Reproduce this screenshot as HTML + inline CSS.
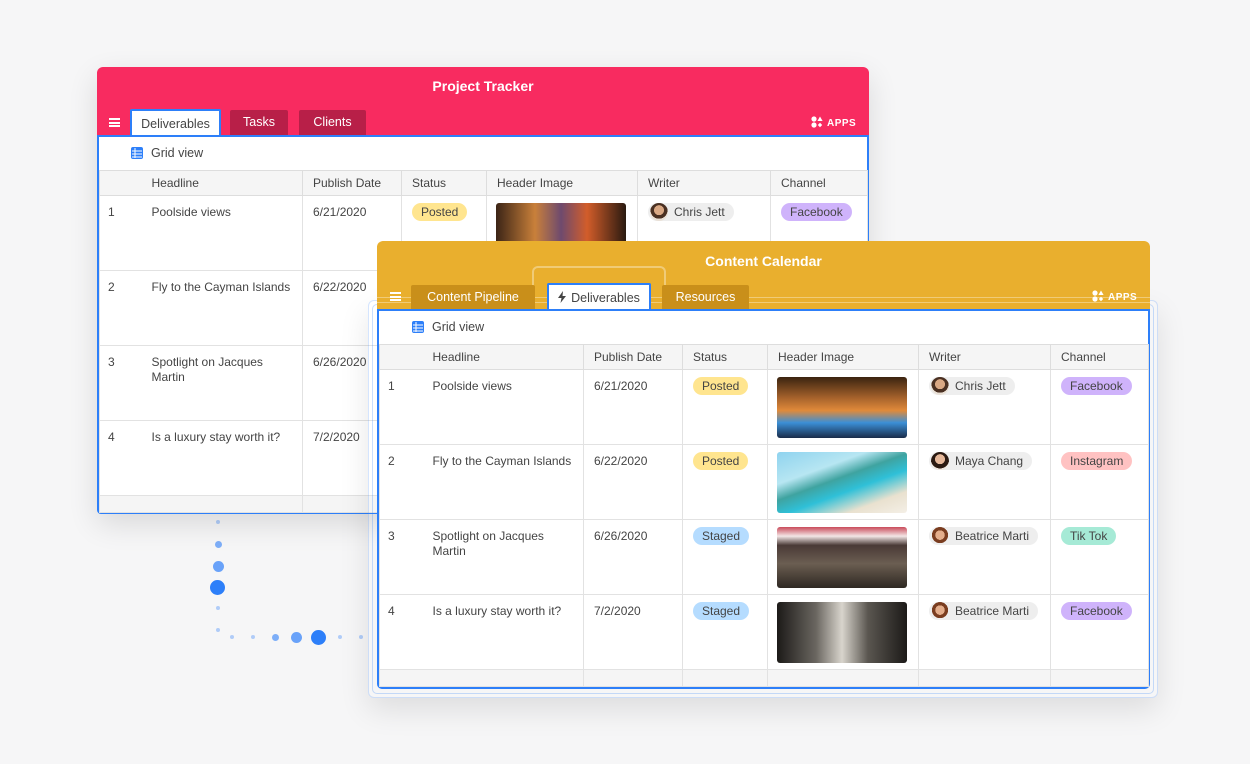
<!DOCTYPE html>
<html><head><meta charset="utf-8"><style>
*{box-sizing:border-box;margin:0;padding:0}
body{width:1250px;height:764px;background:#f6f6f7;font-family:"Liberation Sans",sans-serif;position:relative;overflow:hidden;color:#333}
.card{position:absolute;border-radius:6px;overflow:visible}
.hdr{position:absolute;left:0;right:0;top:0;border-radius:6px 6px 0 0}
.title{position:absolute;left:0;right:0;text-align:center;color:#fff;font-size:14px;font-weight:bold}
.tab{position:absolute;height:25px;font-size:12.5px;text-align:center;line-height:25px;border-radius:2px 2px 0 0}
.body{position:absolute;background:#fff;border:2px solid #2d7ff9;border-top-width:2px}
.gv{height:33px;font-size:12.5px;color:#444;position:relative}
.gv span{position:absolute;top:9px}
table{border-collapse:collapse;table-layout:fixed;font-size:12px;color:#444}
th{background:#f5f5f5;font-weight:normal;text-align:left;height:25px;border:1px solid #ddd;border-top:1px solid #ddd;padding-left:10px;font-size:12px}
td{height:75px;vertical-align:top;border:1px solid #e2e2e2;padding:9px 10px 0 10px;line-height:15px}
td.n,th.n{border-right:none;padding-left:8px}
td.h,th.h{border-left:none}
tr.f td{height:17px;background:#f5f5f5;padding:0}
.pill{display:inline-block;border-radius:10px;padding:0 9px;height:18px;line-height:18px;font-size:12px;color:#444;margin-top:-2px}
.wr{display:inline-block;background:#eee;border-radius:10px;height:18px;line-height:18px;padding:0 9px 0 2px;font-size:12px;margin-top:-2px;white-space:nowrap}
.av{display:inline-block;width:18px;height:18px;border-radius:50%;vertical-align:top;margin-right:6px;background:radial-gradient(circle at 50% 40%,#d9a884 0 35%,#4a3022 36% 60%,#e9e0d6 61%)}
.img{width:130px;height:61px;border-radius:3px;margin:-2px 0 0 -1px}
.dot{position:absolute;border-radius:50%;background:#2d7ff9}
.ham{position:absolute;width:11px;height:9px;border-top:2px solid #fff;border-bottom:2px solid #fff}
.ham:after{content:"";position:absolute;left:0;right:0;top:1.5px;height:2px;background:#fff}
.apps{position:absolute;color:#fff;font-size:10px;font-weight:bold;letter-spacing:.5px}
.apps svg{vertical-align:-2px;margin-right:4px}
</style></head><body>

<div class="dot" style="left:216px;top:520px;width:4px;height:4px;opacity:.35"></div>
<div class="dot" style="left:215px;top:541px;width:7px;height:7px;opacity:.6"></div>
<div class="dot" style="left:213px;top:561px;width:11px;height:11px;opacity:.7"></div>
<div class="dot" style="left:210px;top:580px;width:15px;height:15px"></div>
<div class="dot" style="left:216px;top:606px;width:4px;height:4px;opacity:.35"></div>
<div class="dot" style="left:216px;top:628px;width:4px;height:4px;opacity:.35"></div>
<div class="dot" style="left:230px;top:635px;width:4px;height:4px;opacity:.35"></div>
<div class="dot" style="left:251px;top:635px;width:4px;height:4px;opacity:.35"></div>
<div class="dot" style="left:272px;top:634px;width:7px;height:7px;opacity:.6"></div>
<div class="dot" style="left:291px;top:632px;width:11px;height:11px;opacity:.7"></div>
<div class="dot" style="left:311px;top:630px;width:15px;height:15px"></div>
<div class="dot" style="left:338px;top:635px;width:4px;height:4px;opacity:.35"></div>
<div class="dot" style="left:359px;top:635px;width:4px;height:4px;opacity:.35"></div>

<div class="card" style="left:97px;top:67px;width:772px;height:447px;box-shadow:0 10px 30px rgba(0,0,0,.12)">
  <div class="hdr" style="height:70px;background:#f82b60"></div>
  <div class="title" style="top:11px">Project Tracker</div>
  <div class="ham" style="left:12px;top:51px"></div>
  <div class="tab" style="left:33px;top:42px;width:91px;height:28px;background:#fff;color:#444;border:2px solid #2d7ff9;border-bottom:none;line-height:26px">Deliverables</div>
  <div class="tab" style="left:133px;top:43px;width:58px;background:#b81f48;color:#fff">Tasks</div>
  <div class="tab" style="left:202px;top:43px;width:67px;background:#b81f48;color:#fff">Clients</div>
  <div class="apps" style="left:714px;top:49px"><svg width="12" height="12"><circle cx="3" cy="3" r="2.6" fill="#fff"/><circle cx="3" cy="9" r="2.6" fill="#fff"/><path d="M9 0.5L11.6 5H6.4Z M6.8 9L9 6.8L11.2 9L9 11.2Z" fill="#fff"/></svg>APPS</div>
  <div class="body" style="left:0;top:68px;width:772px;height:379px;border-radius:0 0 4px 4px">
    <div class="gv"><svg style="position:absolute;left:32px;top:10px" width="12" height="12"><rect x="0" y="0" width="12" height="12" rx="2" fill="#2d7ff9"/><path d="M1 4H11M1 7H11M1 10H11M4 1V11" stroke="#fff" stroke-width="1"/></svg><span style="left:52px">Grid view</span></div>
    <table style="width:768px">
      <colgroup><col style="width:42px"><col style="width:161px"><col style="width:99px"><col style="width:85px"><col style="width:151px"><col style="width:133px"><col style="width:97px"></colgroup>
      <tr><th class="n"></th><th class="h">Headline</th><th>Publish Date</th><th>Status</th><th>Header Image</th><th>Writer</th><th>Channel</th></tr>
      <tr><td class="n">1</td><td class="h">Poolside views</td><td>6/21/2020</td><td><span class="pill" style="background:#ffe58f">Posted</span></td><td><div class="img" style="background:linear-gradient(90deg,#3b2416,#c9803a 30%,#6e4a6e 50%,#d25d2a 70%,#2a1a10)"></div></td><td><span class="wr"><span class="av"></span>Chris Jett</span></td><td><span class="pill" style="background:#cfb3fb">Facebook</span></td></tr>
      <tr><td class="n">2</td><td class="h">Fly to the Cayman Islands</td><td>6/22/2020</td><td></td><td></td><td></td><td></td></tr>
      <tr><td class="n">3</td><td class="h">Spotlight on Jacques Martin</td><td>6/26/2020</td><td></td><td></td><td></td><td></td></tr>
      <tr><td class="n">4</td><td class="h">Is a luxury stay worth it?</td><td>7/2/2020</td><td></td><td></td><td></td><td></td></tr>
      <tr class="f"><td class="n"></td><td class="h"></td><td></td><td></td><td></td><td></td><td></td></tr>
    </table>
  </div>
</div>

<div style="position:absolute;left:368px;top:300px;width:790px;height:398px;border-radius:6px;border:1px solid rgba(45,127,249,.2);box-shadow:0 12px 30px rgba(0,0,0,.1)"></div>
<div style="position:absolute;left:372px;top:304px;width:782px;height:390px;border-radius:5px;border:1px solid rgba(45,127,249,.25)"></div>

<div class="card" style="left:377px;top:241px;width:773px;height:448px">
  <div class="hdr" style="height:70px;background:#e9af2e"></div>
  <div class="title" style="top:12px">Content Calendar</div>
  <div class="ham" style="left:13px;top:51px"></div>
  <div style="position:absolute;left:155px;top:25px;width:134px;height:45px;border:2px solid rgba(255,255,255,.35);border-radius:6px 6px 0 0;border-bottom:none"></div>
  <div style="position:absolute;left:0;right:0;top:56px;height:6px;border-top:1px solid rgba(255,255,255,.35);border-bottom:1px solid rgba(255,255,255,.35)"></div>
  <div class="tab" style="left:34px;top:44px;width:124px;background:#c98f1a;color:#fff">Content Pipeline</div>
  <div class="tab" style="left:170px;top:42px;width:104px;height:28px;background:#fff;color:#444;border:2px solid #2d7ff9;border-bottom:none;line-height:26px"><svg width="8" height="12" style="vertical-align:-1px;margin-right:5px"><path d="M5 0L0 7H3.5L2.5 12L8 5H4.5Z" fill="#444"/></svg>Deliverables</div>
  <div class="tab" style="left:285px;top:44px;width:87px;background:#c98f1a;color:#fff">Resources</div>
  <div class="apps" style="left:715px;top:49px"><svg width="12" height="12"><circle cx="3" cy="3" r="2.6" fill="#fff"/><circle cx="3" cy="9" r="2.6" fill="#fff"/><path d="M9 0.5L11.6 5H6.4Z M6.8 9L9 6.8L11.2 9L9 11.2Z" fill="#fff"/></svg>APPS</div>
  <div class="body" style="left:0;top:68px;width:773px;height:380px;border-radius:0 0 5px 5px">
    <div class="gv"><svg style="position:absolute;left:33px;top:10px" width="12" height="12"><rect x="0" y="0" width="12" height="12" rx="2" fill="#2d7ff9"/><path d="M1 4H11M1 7H11M1 10H11M4 1V11" stroke="#fff" stroke-width="1"/></svg><span style="left:53px">Grid view</span></div>
    <table style="width:769px">
      <colgroup><col style="width:43px"><col style="width:161px"><col style="width:99px"><col style="width:85px"><col style="width:151px"><col style="width:132px"><col style="width:98px"></colgroup>
      <tr><th class="n"></th><th class="h">Headline</th><th>Publish Date</th><th>Status</th><th>Header Image</th><th>Writer</th><th>Channel</th></tr>
      <tr><td class="n">1</td><td class="h">Poolside views</td><td>6/21/2020</td><td><span class="pill" style="background:#ffe58f">Posted</span></td><td><div class="img" style="background:linear-gradient(180deg,#3a2410 0,#a8642c 35%,#e08a3a 55%,#3b8fd6 75%,#1a2c4a)"></div></td><td><span class="wr"><span class="av"></span>Chris Jett</span></td><td><span class="pill" style="background:#cfb3fb">Facebook</span></td></tr>
      <tr><td class="n">2</td><td class="h">Fly to the Cayman Islands</td><td>6/22/2020</td><td><span class="pill" style="background:#ffe58f">Posted</span></td><td><div class="img" style="background:linear-gradient(160deg,#8fd3ef 0,#b7e6f2 30%,#3fa3a0 45%,#2fc0d8 60%,#e9e1cf 80%,#f4efe6)"></div></td><td><span class="wr"><span class="av" style="background:radial-gradient(circle at 50% 40%,#e6b89a 0 35%,#2b1a12 36% 65%,#efe5dc 66%)"></span>Maya Chang</span></td><td><span class="pill" style="background:#ffc2c2">Instagram</span></td></tr>
      <tr><td class="n">3</td><td class="h">Spotlight on Jacques Martin</td><td>6/26/2020</td><td><span class="pill" style="background:#b5dcff">Staged</span></td><td><div class="img" style="background:linear-gradient(180deg,#c94a5a 0,#f3e6e6 15%,#4a3a36 30%,#6b5e52 60%,#2e2822 100%)"></div></td><td><span class="wr"><span class="av" style="background:radial-gradient(circle at 50% 45%,#e4ae8c 0 35%,#7a3d20 36% 60%,#eee 61%)"></span>Beatrice Marti</span></td><td><span class="pill" style="background:#a6ead6">Tik Tok</span></td></tr>
      <tr><td class="n">4</td><td class="h">Is a luxury stay worth it?</td><td>7/2/2020</td><td><span class="pill" style="background:#b5dcff">Staged</span></td><td><div class="img" style="background:linear-gradient(90deg,#1c1a18,#6a6660 30%,#d8d4cc 50%,#5a5650 70%,#1c1a18)"></div></td><td><span class="wr"><span class="av" style="background:radial-gradient(circle at 50% 45%,#e4ae8c 0 35%,#7a3d20 36% 60%,#eee 61%)"></span>Beatrice Marti</span></td><td><span class="pill" style="background:#cfb3fb">Facebook</span></td></tr>
      <tr class="f"><td class="n"></td><td class="h"></td><td></td><td></td><td></td><td></td><td></td></tr>
    </table>
  </div>
</div>
</body></html>
